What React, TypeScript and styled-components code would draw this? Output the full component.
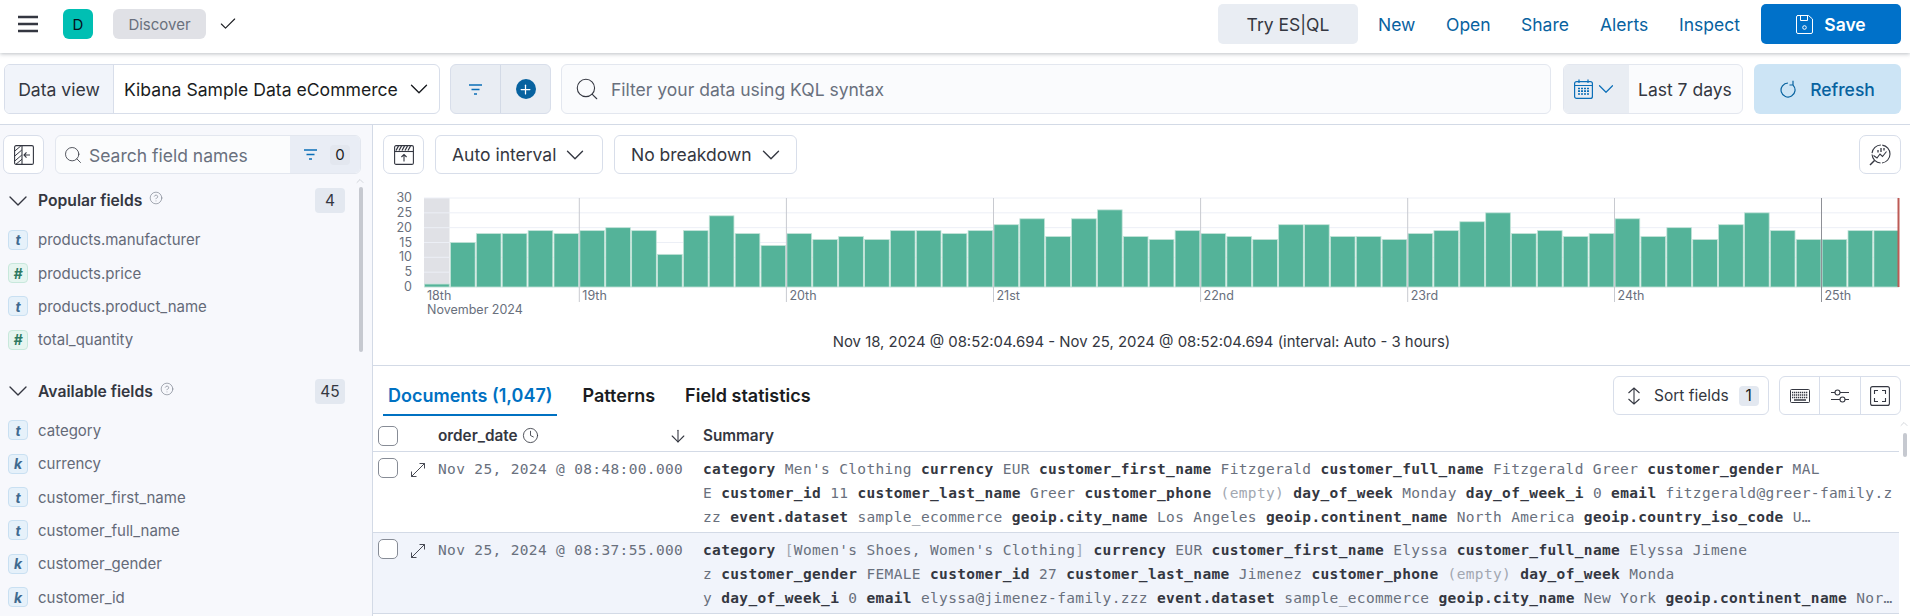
import React from 'react';
import styled, { createGlobalStyle } from 'styled-components';
import { Check, ChevronDown, ChevronUp, CircleHelp, Clock, ArrowDown, Plus, Search } from 'lucide-react';

const GlobalStyle = createGlobalStyle`
  html, body { margin: 0; padding: 0; background: #fff; }
  body { font-family: Inter, "Noto Sans", sans-serif; color: #343741; }
  * { box-sizing: border-box; }
`;

type FieldKind = 't' | 'k' | '#';

const POPULAR: [FieldKind, string][] = [
  ['t', 'products.manufacturer'],
  ['#', 'products.price'],
  ['t', 'products.product_name'],
  ['#', 'total_quantity'],
];

const AVAILABLE: [FieldKind, string][] = [
  ['t', 'category'],
  ['k', 'currency'],
  ['t', 'customer_first_name'],
  ['t', 'customer_full_name'],
  ['k', 'customer_gender'],
  ['k', 'customer_id'],
];

const BARS = [
  1, 15, 18, 18, 19, 18,
  19, 20, 19, 11, 19, 24, 18, 14,
  18, 16, 17, 16, 19, 19, 18, 19,
  21, 23, 17, 23, 26, 17, 16, 19,
  18, 17, 16, 21, 21, 17, 17, 16,
  18, 19, 22, 25, 18, 19, 17, 18,
  23, 17, 20, 16, 21, 25, 19, 16,
  16, 19, 19,
];

const DAYS = [
  { label: '19th', x: 579.3 },
  { label: '20th', x: 786.4 },
  { label: '21st', x: 993.5 },
  { label: '22nd', x: 1200.6 },
  { label: '23rd', x: 1407.7 },
  { label: '24th', x: 1614.5 },
  { label: '25th', x: 1821.5 },
];

// ** marks a field name, ~~ a dimmed token
const DOCS = [
  {
    date: 'Nov 25, 2024 @ 08:48:00.000',
    lines: [
      "**category** Men's Clothing **currency** EUR **customer_first_name** Fitzgerald **customer_full_name** Fitzgerald Greer **customer_gender** MAL",
      'E **customer_id** 11 **customer_last_name** Greer **customer_phone** ~~(empty)~~ **day_of_week** Monday **day_of_week_i** 0 **email** fitzgerald@greer-family.z',
      'zz **event.dataset** sample_ecommerce **geoip.city_name** Los Angeles **geoip.continent_name** North America **geoip.country_iso_code** U…',
    ],
  },
  {
    date: 'Nov 25, 2024 @ 08:37:55.000',
    lines: [
      "**category** ~~[~~Women's Shoes, Women's Clothing~~]~~ **currency** EUR **customer_first_name** Elyssa **customer_full_name** Elyssa Jimene",
      'z **customer_gender** FEMALE **customer_id** 27 **customer_last_name** Jimenez **customer_phone** ~~(empty)~~ **day_of_week** Monda',
      'y **day_of_week_i** 0 **email** elyssa@jimenez-family.zzz **event.dataset** sample_ecommerce **geoip.city_name** New York **geoip.continent_name** Nor…',
    ],
  },
];

const FunnelIcon = () => (
  <svg width="13" height="11" viewBox="0 0 13 11" fill="none" stroke="#0b6fb8" strokeWidth="1.3">
    <path d="M0 1h13M2.500 5.500h8M5 10h3" />
  </svg>
);

const HamburgerIcon = () => (
  <svg width="20" height="18" viewBox="0 0 20 18" fill="none" stroke="#343741" strokeWidth="2.6">
    <path d="M0 2h20M0 9h20M0 16h20" />
  </svg>
);

const SaveIcon = () => (
  <svg width="17" height="19" viewBox="0 0 17 19" fill="none" stroke="#fff" strokeWidth="1">
    <path d="M1.500.5h11l4 3.500v13a1.500 1.500 0 0 1-1.500 1.500H2A1.500 1.500 0 0 1 .5 17V2A1.500 1.500 0 0 1 2 .5z" />
    <path d="M4.500.5v5h7v-5" />
    <circle cx="8.500" cy="12.500" r="1.800" />
  </svg>
);

const CalendarIcon = () => (
  <svg width="19" height="20" viewBox="0 0 19 20" fill="none" stroke="#0b6fb8" strokeWidth="1.2">
    <rect x=".6" y="2.600" width="17.800" height="16.800" rx="2" />
    <path d="M.6 6.500h17.800M5 .5v3.500M14 .5v3.500" />
    <path d="M4 9.500h11M4 12.200h11M4 15h11" strokeWidth="1.700" strokeDasharray="2 1" />
  </svg>
);

const RefreshIcon = () => (
  <svg width="16" height="18" viewBox="0 0 16 18" fill="none" stroke="#07629f" strokeWidth="1.2">
    <path d="M13 5.050A7 7 0 1 1 8 3" />
    <path d="M13 .8v4.200H9.500" />
  </svg>
);

const SidebarToggleIcon = () => (
  <svg width="20" height="20" viewBox="0 0 20 20" fill="none" stroke="#343741" strokeWidth="1.100">
    <rect x=".6" y=".6" width="18.800" height="18.800" rx="1.500" />
    <path d="M.8 6l6-5M.8 11l7-6M.8 16l7-6M2 19.200l6-5" strokeWidth="1" />
    <path d="M8 .6v18.800" />
    <path d="M16 10h-6M12.500 7.400L10 10l2.500 2.600" />
  </svg>
);

const ChartToggleIcon = () => (
  <svg width="20" height="20" viewBox="0 0 20 20" fill="none" stroke="#343741" strokeWidth="1.100">
    <rect x=".6" y=".6" width="18.800" height="18.800" rx="1.500" />
    <path d="M.6 6.500h18.800" />
    <path d="M2 5.500l2.500-4.500M5 5.500l2.500-4.500M8 5.500l2.500-4.500M11 5.500l2.500-4.500M14 5.500l2.500-4.500" strokeWidth="1.300" />
    <path d="M10 16.500V9.500M7.400 12L10 9.500l2.600 2.500" />
  </svg>
);

const InspectChartIcon = () => (
  <svg width="22" height="22" viewBox="0 0 22 22" fill="none" stroke="#343741" strokeWidth="1.100">
    <circle cx="12" cy="10" r="9" strokeDasharray="13 1.500" />
    <path d="M1 21l4.500-4.500" strokeWidth="1.400" />
    <path d="M4.500 11.500l3.500 2.500 3-4 2.500 2.500 4-5" />
    <path d="M9 8.500V6M12 8V4M15 6.500V4" strokeWidth="1.300" />
  </svg>
);

const SortIcon = () => (
  <svg width="14" height="18" viewBox="0 0 14 18" fill="none" stroke="#343741" strokeWidth="1.100">
    <path d="M7 1v16M1.500 6L7 1l5.500 5M1.500 12L7 17l5.500-5" />
  </svg>
);

const KeyboardIcon = () => (
  <svg width="20" height="14" viewBox="0 0 20 14" fill="none" stroke="#343741">
    <rect x=".5" y=".5" width="19" height="13" rx="1" />
    <path d="M2 3.500h16M2 6h16M2 8.500h16" strokeWidth="1.600" strokeDasharray="1.300 .7" />
    <path d="M4 11h12" strokeWidth="1.500" />
  </svg>
);

const SlidersIcon = () => (
  <svg width="18" height="14" viewBox="0 0 18 14" fill="none" stroke="#343741" strokeWidth="1.100">
    <path d="M0 3.500h4M9 3.500h9M0 10.500h9M14 10.500h4" />
    <circle cx="6.500" cy="3.500" r="2.500" />
    <circle cx="11.500" cy="10.500" r="2.500" />
  </svg>
);

const FullscreenIcon = () => (
  <svg width="20" height="20" viewBox="0 0 20 20" fill="none" stroke="#343741" strokeWidth="1.100">
    <rect x=".6" y=".6" width="18.800" height="18.800" rx="2" />
    <path d="M4.500 8V4.500H8M12 4.500h3.500V8M15.500 12v3.500H12M8 15.500H4.500V12" />
  </svg>
);

const ExpandIcon = () => (
  <svg width="14" height="14" viewBox="0 0 14 14" fill="none" stroke="#343741" strokeWidth=".9">
    <path d="M.5 13.500l13-13M8.500.5h5v5M.5 8.500v5h5" />
  </svg>
);

const Page = styled.div`
  width: 1910px;
  height: 616px;
  overflow: hidden;
  display: flex;
  flex-direction: column;
  background: #fff;
`;

const TopBar = styled.header`
  height: 53px;
  flex: none;
  display: flex;
  align-items: center;
  justify-content: space-between;
  padding: 0 9px 5px 18px;
  box-shadow: 0 1px 4px rgba(105, 112, 125, 0.45);
  position: relative;
  z-index: 1;
`;

const TopLeft = styled.div`
  display: flex;
  align-items: center;
`;

const TopRight = styled.div`
  display: flex;
  align-items: center;
`;

const Avatar = styled.div`
  width: 30px;
  height: 30px;
  margin-left: 25px;
  border-radius: 6px;
  background: #00bfb3;
  color: #07101c;
  display: flex;
  align-items: center;
  justify-content: center;
  font-size: 15px;
`;

const Crumb = styled.div`
  width: 93px;
  height: 30px;
  margin: 0 12px 0 20px;
  border-radius: 6px;
  background: #e0e1e6;
  color: #69707d;
  font-size: 15px;
  display: flex;
  align-items: center;
  justify-content: center;
`;

const EsqlButton = styled.div`
  width: 140px;
  height: 40px;
  margin-right: 20px;
  border-radius: 5px;
  background: #e9edf3;
  color: #343741;
  font-size: 17.500px;
  display: flex;
  align-items: center;
  justify-content: center;
`;

const NavLink = styled.a<{ $width: number }>`
  width: ${p => p.$width}px;
  color: #07629f;
  font-size: 17.500px;
`;

const SaveButton = styled.button`
  width: 140px;
  height: 40px;
  border: 0;
  border-radius: 5px;
  background: #0071c9;
  color: #fff;
  font: 600 17.500px Inter, sans-serif;
  display: flex;
  align-items: center;
  justify-content: center;
  gap: 11px;
`;

const QueryBar = styled.div`
  height: 72px;
  flex: none;
  display: flex;
  gap: 10px;
  padding: 11px 9px 10px 4px;
  border-bottom: 1px solid #d3dae6;
`;

const DataView = styled.div`
  width: 436px;
  flex: none;
  display: flex;
  border: 1px solid #d8deea;
  border-radius: 6px;
  overflow: hidden;
  font-size: 17.600px;
`;

const DataViewLabel = styled.div`
  width: 109px;
  flex: none;
  background: #f1f4fa;
  border-right: 1px solid #d8deea;
  display: flex;
  align-items: center;
  justify-content: center;
`;

const DataViewValue = styled.div`
  flex: 1;
  display: flex;
  align-items: center;
  justify-content: space-between;
  padding: 0 5px 0 10px;
  color: #1a1c21;
`;

const FilterGroup = styled.div`
  width: 101px;
  flex: none;
  display: flex;
  background: #e9edf3;
  border: 1px solid #d8deea;
  border-radius: 6px;
`;

const FilterCell = styled.div`
  flex: 1;
  display: flex;
  align-items: center;
  justify-content: center;
  & + & {
    border-left: 1px solid #d3dae6;
  }
`;

const PlusDisc = styled.span`
  width: 20px;
  height: 20px;
  border-radius: 50%;
  background: #07629f;
  color: #fff;
  display: flex;
  align-items: center;
  justify-content: center;
`;

const QueryInput = styled.div`
  flex: 1;
  display: flex;
  align-items: center;
  gap: 11px;
  padding: 0 12px;
  background: #fafbfd;
  border: 1px solid #e3e7ef;
  border-radius: 6px;
  color: #69707d;
  font-size: 17.500px;
`;

const DateGroup = styled.div`
  width: 180px;
  flex: none;
  margin-left: 2px;
  display: flex;
  background: #fafbfd;
  border: 1px solid #e3e7ef;
  border-radius: 6px;
  overflow: hidden;
  font-size: 17.500px;
  color: #343741;
`;

const DateIcons = styled.div`
  width: 65px;
  flex: none;
  background: #e9edf3;
  display: flex;
  align-items: center;
  padding-left: 10px;
  color: #0b6fb8;
`;

const DateText = styled.div`
  flex: 1;
  display: flex;
  align-items: center;
  padding-left: 9px;
`;

const RefreshButton = styled.div`
  width: 147px;
  flex: none;
  margin-left: 1px;
  border-radius: 6px;
  background: #cce4f5;
  color: #07629f;
  font-size: 17.500px;
  font-weight: 500;
  display: flex;
  align-items: center;
  justify-content: center;
  gap: 14px;
`;

const Body = styled.div`
  flex: 1;
  min-height: 0;
  display: flex;
`;

const Sidebar = styled.aside`
  width: 373px;
  flex: none;
  position: relative;
  background: #f7f8fc;
  border-right: 1px solid #d3dae6;
  padding: 10px 27px 0 3px;
`;

const SideToolbar = styled.div`
  display: flex;
  gap: 11px;
  height: 39px;
  margin-right: -16px;
`;

const IconButton = styled.div<{ $width?: number }>`
  width: ${p => p.$width ?? 41}px;
  height: 39px;
  flex: none;
  background: #fff;
  border: 1px solid #d8deea;
  border-radius: 7px;
  display: flex;
  align-items: center;
  justify-content: center;
`;

const FieldSearch = styled.div`
  flex: 1;
  display: flex;
  background: #fbfcfd;
  border: 1px solid #e3e7ef;
  border-radius: 6px;
  overflow: hidden;
`;

const FieldSearchText = styled.div`
  flex: 1;
  display: flex;
  align-items: center;
  gap: 6px;
  padding: 1px 0 0 7px;
  color: #69707d;
  font-size: 17.500px;
  white-space: nowrap;
`;

const FieldFilter = styled.div`
  width: 70px;
  flex: none;
  background: #e9edf5;
  display: flex;
  align-items: center;
  justify-content: flex-end;
  gap: 13px;
  padding-right: 10px;
`;

const ZeroBadge = styled.span`
  width: 20px;
  height: 20px;
  border-radius: 4px;
  background: #e3e7ef;
  color: #1a1c21;
  font-size: 15px;
  display: flex;
  align-items: center;
  justify-content: center;
`;

const SectionHeader = styled.div<{ $top: number }>`
  height: 25px;
  margin: ${p => p.$top}px 0 0 -1px;
  display: flex;
  align-items: center;
`;

const SectionTitle = styled.span`
  margin-left: 4px;
  font-size: 15.700px;
  font-weight: 600;
  color: #343741;
`;

const HelpMark = styled.span`
  margin: -5px 0 0 7px;
  display: flex;
  color: #69707d;
`;

const CountBadge = styled.span`
  margin-left: auto;
  width: 30px;
  height: 25px;
  border-radius: 4px;
  background: #e3e8f0;
  color: #343741;
  font-size: 15.500px;
  display: flex;
  align-items: center;
  justify-content: center;
`;

const FieldList = styled.div`
  margin-top: 10px;
`;

const FieldRow = styled.div`
  height: 33.400px;
  display: flex;
  align-items: center;
  padding-left: 5px;
  gap: 10px;
  font-size: 15px;
  color: #646a78;
`;

const FieldType = styled.span<{ $kind: FieldKind }>`
  width: 20px;
  height: 20px;
  border-radius: 4px;
  flex: none;
  display: flex;
  align-items: center;
  justify-content: center;
  font-size: 14px;
  font-weight: 700;
  font-style: italic;
  background: ${p => (p.$kind === '#' ? '#e6f5f0' : '#e6f1fa')};
  border: 1px solid ${p => (p.$kind === '#' ? '#c8e8dc' : '#c9e0f2')};
  color: ${p => (p.$kind === '#' ? '#2f7a62' : '#3f6a8f')};
`;

const SideScrollArrow = styled.div`
  position: absolute;
  top: 50px;
  right: 6px;
  color: #c6c9d0;
  display: flex;
`;

const SideScrollThumb = styled.div`
  position: absolute;
  top: 62px;
  right: 9px;
  width: 4px;
  height: 165px;
  border-radius: 2px;
  background: #c6c9d0;
`;

const Main = styled.main`
  flex: 1;
  min-width: 0;
  position: relative;
`;

const ChartPanel = styled.section`
  height: 241px;
  border-bottom: 1px solid #d3dae6;
`;

const ChartToolbar = styled.div`
  display: flex;
  gap: 11px;
  padding: 10px 9px 0 10px;
`;

const SelectButton = styled.div<{ $width: number }>`
  width: ${p => p.$width}px;
  height: 39px;
  background: #fff;
  border: 1px solid #d8deea;
  border-radius: 6px;
  display: flex;
  align-items: center;
  padding-left: 16px;
  gap: 4px;
  font-size: 17.500px;
  color: #343741;
`;

const ToolbarEnd = styled.div`
  margin-left: auto;
`;

const HistogramSvg = styled.svg`
  display: block;
  margin-top: 16px;
`;

const AxisText = styled.text`
  font: 12.500px Inter, sans-serif;
  fill: #69707d;
`;

const TimeRange = styled.div`
  margin-top: 8px;
  text-align: center;
  font-size: 14.900px;
  color: #343741;
`;

const TabsRow = styled.div`
  height: 50px;
  display: flex;
  align-items: flex-end;
  padding: 0 9px 0 10px;
`;

const Tab = styled.div<{ $active?: boolean }>`
  height: 48px;
  padding: 8px 5px 0;
  margin-right: 20px;
  display: flex;
  align-items: center;
  font-size: 18px;
  font-weight: 600;
  color: ${p => (p.$active ? '#0071c2' : '#1a1c21')};
  border-bottom: 2px solid ${p => (p.$active ? '#0071c2' : 'transparent')};
`;

const TabsTools = styled.div`
  margin-left: auto;
  display: flex;
  gap: 10px;
  align-self: flex-end;
  margin-bottom: 1px;
`;

const SortButton = styled.div`
  width: 156px;
  height: 39px;
  border: 1px solid #d8deea;
  border-radius: 6px;
  display: flex;
  align-items: center;
  padding-left: 13px;
  gap: 13px;
  font-size: 15.500px;
  color: #343741;
`;

const SortCount = styled.span`
  width: 20px;
  height: 20px;
  margin-left: -3px;
  border-radius: 4px;
  background: #e3e8f0;
  color: #1a1c21;
  display: flex;
  align-items: center;
  justify-content: center;
`;

const ToolGroup = styled.div`
  width: 122px;
  height: 39px;
  border: 1px solid #d8deea;
  border-radius: 6px;
  display: flex;
`;

const ToolCell = styled.div`
  flex: 1;
  display: flex;
  align-items: center;
  justify-content: center;
  & + & {
    border-left: 1px solid #d8deea;
  }
`;

const GridRow = styled.div`
  margin-right: 11px;
  display: grid;
  grid-template-columns: 20px 40px 265px 1fr;
  padding-left: 5px;
  border-bottom: 1px solid #d3dae6;
`;

const GridHeader = styled(GridRow)`
  height: 36px;
  padding-top: 4px;
  align-items: center;
  font-size: 15.300px;
  font-weight: 600;
  color: #343741;
`;

const DocRow = styled(GridRow)<{ $shaded?: boolean }>`
  height: 81px;
  padding-top: 5px;
  background: ${p => (p.$shaded ? '#f1f4fb' : '#fff')};
`;

const Checkbox = styled.span`
  width: 20px;
  height: 20px;
  display: block;
  background: #fff;
  border: 1px solid #878c96;
  border-radius: 5px;
`;

const RowCheck = styled(Checkbox)`
  margin-top: 1px;
`;

const DateHead = styled.div`
  display: flex;
  align-items: center;
  gap: 4px;
  padding-right: 15px;
`;

const SortArrow = styled.span`
  margin-left: auto;
  display: flex;
`;

const ExpandCell = styled.span`
  padding: 4px 0 0 13px;
`;

const MonoText = styled.div`
  font-family: "DejaVu Sans Mono", "Liberation Mono", monospace;
  font-size: 14.500px;
  letter-spacing: 0.35px;
  line-height: 24px;
  color: #69707d;
  white-space: nowrap;
`;

const FieldName = styled.b`
  font-weight: 700;
  color: #343741;
`;

const Dim = styled.span`
  color: #a2a7b1;
`;

const GridScrollArrow = styled.div`
  position: absolute;
  top: 293px;
  right: 0;
  color: #c6c9d0;
  display: flex;
`;

const GridScrollThumb = styled.div`
  position: absolute;
  top: 308px;
  right: 3px;
  width: 4px;
  height: 24px;
  border-radius: 2px;
  background: #c6c9d0;
`;

const SummaryLine: React.FC<{ text: string }> = ({ text }) => (
  <MonoText>
    {text.split(/(\*\*.*?\*\*|~~.*?~~)/).map((part, i) => {
      if (part.startsWith('**')) return <FieldName key={i}>{part.slice(2, -2)}</FieldName>;
      if (part.startsWith('~~')) return <Dim key={i}>{part.slice(2, -2)}</Dim>;
      return part;
    })}
  </MonoText>
);

const Histogram = () => {
  const pitch = 25.88;
  const baseline = 287;
  const unit = 89 / 30;
  return (
    <HistogramSvg width="1537" height="135" viewBox="373 190 1537 135">
      <rect x="424" y="198" width="25.500" height="89" fill="#e0e1e6" />
      {[0, 5, 10, 15, 20, 25, 30].map(v => (
        <g key={v}>
          <line x1="424" x2="1899" y1={baseline - v * unit} y2={baseline - v * unit} stroke="#eceff6" />
          <AxisText x="412" y={baseline - v * unit + 4} textAnchor="end">{v}</AxisText>
        </g>
      ))}
      {BARS.map((v, i) => (
        <rect
          key={i}
          x={424 + i * pitch + 0.6}
          y={baseline - v * unit}
          width={pitch - 1.2}
          height={v * unit}
          fill="#54b399"
          stroke="#c3e3d8"
          strokeWidth="0.8"
        />
      ))}
      {DAYS.map((d, i) => (
        <g key={d.label}>
          <line x1={d.x} x2={d.x} y1="198" y2="302" stroke={i === 6 ? '#8e9096' : '#c8cad0'} />
          <AxisText x={d.x + 3} y="300">{d.label}</AxisText>
        </g>
      ))}
      <AxisText x="427" y="300">18th</AxisText>
      <AxisText x="427" y="314">November 2024</AxisText>
      <line x1="1898.500" x2="1898.500" y1="198" y2="287" stroke="#bd5a55" strokeWidth="2" />
    </HistogramSvg>
  );
};

const FieldSection: React.FC<{ title: string; count: number; top: number; fields: [FieldKind, string][] }> = ({
  title,
  count,
  top,
  fields,
}) => (
  <>
    <SectionHeader $top={top}>
      <ChevronDown size={32} strokeWidth={1} color="#343741" />
      <SectionTitle>{title}</SectionTitle>
      <HelpMark>
        <CircleHelp size={14} strokeWidth={1} />
      </HelpMark>
      <CountBadge>{count}</CountBadge>
    </SectionHeader>
    <FieldList>
      {fields.map(([kind, name]) => (
        <FieldRow key={name}>
          <FieldType $kind={kind}>{kind}</FieldType>
          {name}
        </FieldRow>
      ))}
    </FieldList>
  </>
);

const App: React.FC = () => (
  <Page>
    <GlobalStyle />
    <TopBar>
      <TopLeft>
        <HamburgerIcon />
        <Avatar>D</Avatar>
        <Crumb>Discover</Crumb>
        <Check size={20} strokeWidth={1.3} color="#1a1c21" />
      </TopLeft>
      <TopRight>
        <EsqlButton>Try ES|QL</EsqlButton>
        <NavLink $width={68}>New</NavLink>
        <NavLink $width={75}>Open</NavLink>
        <NavLink $width={79}>Share</NavLink>
        <NavLink $width={79}>Alerts</NavLink>
        <NavLink $width={82}>Inspect</NavLink>
        <SaveButton>
          <SaveIcon />
          Save
        </SaveButton>
      </TopRight>
    </TopBar>

    <QueryBar>
      <DataView>
        <DataViewLabel>Data view</DataViewLabel>
        <DataViewValue>
          Kibana Sample Data eCommerce
          <ChevronDown size={30} strokeWidth={1.1} color="#1a1c21" />
        </DataViewValue>
      </DataView>
      <FilterGroup>
        <FilterCell>
          <FunnelIcon />
        </FilterCell>
        <FilterCell>
          <PlusDisc>
            <Plus size={15} strokeWidth={2} />
          </PlusDisc>
        </FilterCell>
      </FilterGroup>
      <QueryInput>
        <Search size={26} strokeWidth={1} color="#343741" />
        Filter your data using KQL syntax
      </QueryInput>
      <DateGroup>
        <DateIcons>
          <CalendarIcon />
          <ChevronDown size={26} strokeWidth={1.1} />
        </DateIcons>
        <DateText>Last 7 days</DateText>
      </DateGroup>
      <RefreshButton>
        <RefreshIcon />
        Refresh
      </RefreshButton>
    </QueryBar>

    <Body>
      <Sidebar>
        <SideToolbar>
          <IconButton>
            <SidebarToggleIcon />
          </IconButton>
          <FieldSearch>
            <FieldSearchText>
              <Search size={20} strokeWidth={1} color="#343741" />
              Search field names
            </FieldSearchText>
            <FieldFilter>
              <FunnelIcon />
              <ZeroBadge>0</ZeroBadge>
            </FieldFilter>
          </FieldSearch>
        </SideToolbar>
        <FieldSection title="Popular fields" count={4} top={14} fields={POPULAR} />
        <FieldSection title="Available fields" count={45} top={22} fields={AVAILABLE} />
        <SideScrollArrow>
          <ChevronUp size={12} strokeWidth={1.5} />
        </SideScrollArrow>
        <SideScrollThumb />
      </Sidebar>

      <Main>
        <ChartPanel>
          <ChartToolbar>
            <IconButton>
              <ChartToggleIcon />
            </IconButton>
            <SelectButton $width={168}>
              Auto interval
              <ChevronDown size={30} strokeWidth={1.1} />
            </SelectButton>
            <SelectButton $width={183}>
              No breakdown
              <ChevronDown size={30} strokeWidth={1.1} />
            </SelectButton>
            <ToolbarEnd>
              <IconButton $width={42}>
                <InspectChartIcon />
              </IconButton>
            </ToolbarEnd>
          </ChartToolbar>
          <Histogram />
          <TimeRange>Nov 18, 2024 @ 08:52:04.694 - Nov 25, 2024 @ 08:52:04.694 (interval: Auto - 3 hours)</TimeRange>
        </ChartPanel>

        <TabsRow>
          <Tab $active>Documents (1,047)</Tab>
          <Tab>Patterns</Tab>
          <Tab>Field statistics</Tab>
          <TabsTools>
            <SortButton>
              <SortIcon />
              Sort fields
              <SortCount>1</SortCount>
            </SortButton>
            <ToolGroup>
              <ToolCell>
                <KeyboardIcon />
              </ToolCell>
              <ToolCell>
                <SlidersIcon />
              </ToolCell>
              <ToolCell>
                <FullscreenIcon />
              </ToolCell>
            </ToolGroup>
          </TabsTools>
        </TabsRow>

        <GridHeader>
          <Checkbox />
          <span />
          <DateHead>
            order_date
            <Clock size={17} strokeWidth={1.2} />
            <SortArrow>
              <ArrowDown size={20} strokeWidth={1.3} />
            </SortArrow>
          </DateHead>
          <span>Summary</span>
        </GridHeader>

        {DOCS.map((doc, i) => (
          <DocRow key={doc.date} $shaded={i === 1}>
            <RowCheck />
            <ExpandCell>
              <ExpandIcon />
            </ExpandCell>
            <MonoText>{doc.date}</MonoText>
            <div>
              {doc.lines.map(line => (
                <SummaryLine key={line} text={line} />
              ))}
            </div>
          </DocRow>
        ))}
        <GridScrollArrow>
          <ChevronUp size={12} strokeWidth={1.5} />
        </GridScrollArrow>
        <GridScrollThumb />
      </Main>
    </Body>
  </Page>
);

export default App;
